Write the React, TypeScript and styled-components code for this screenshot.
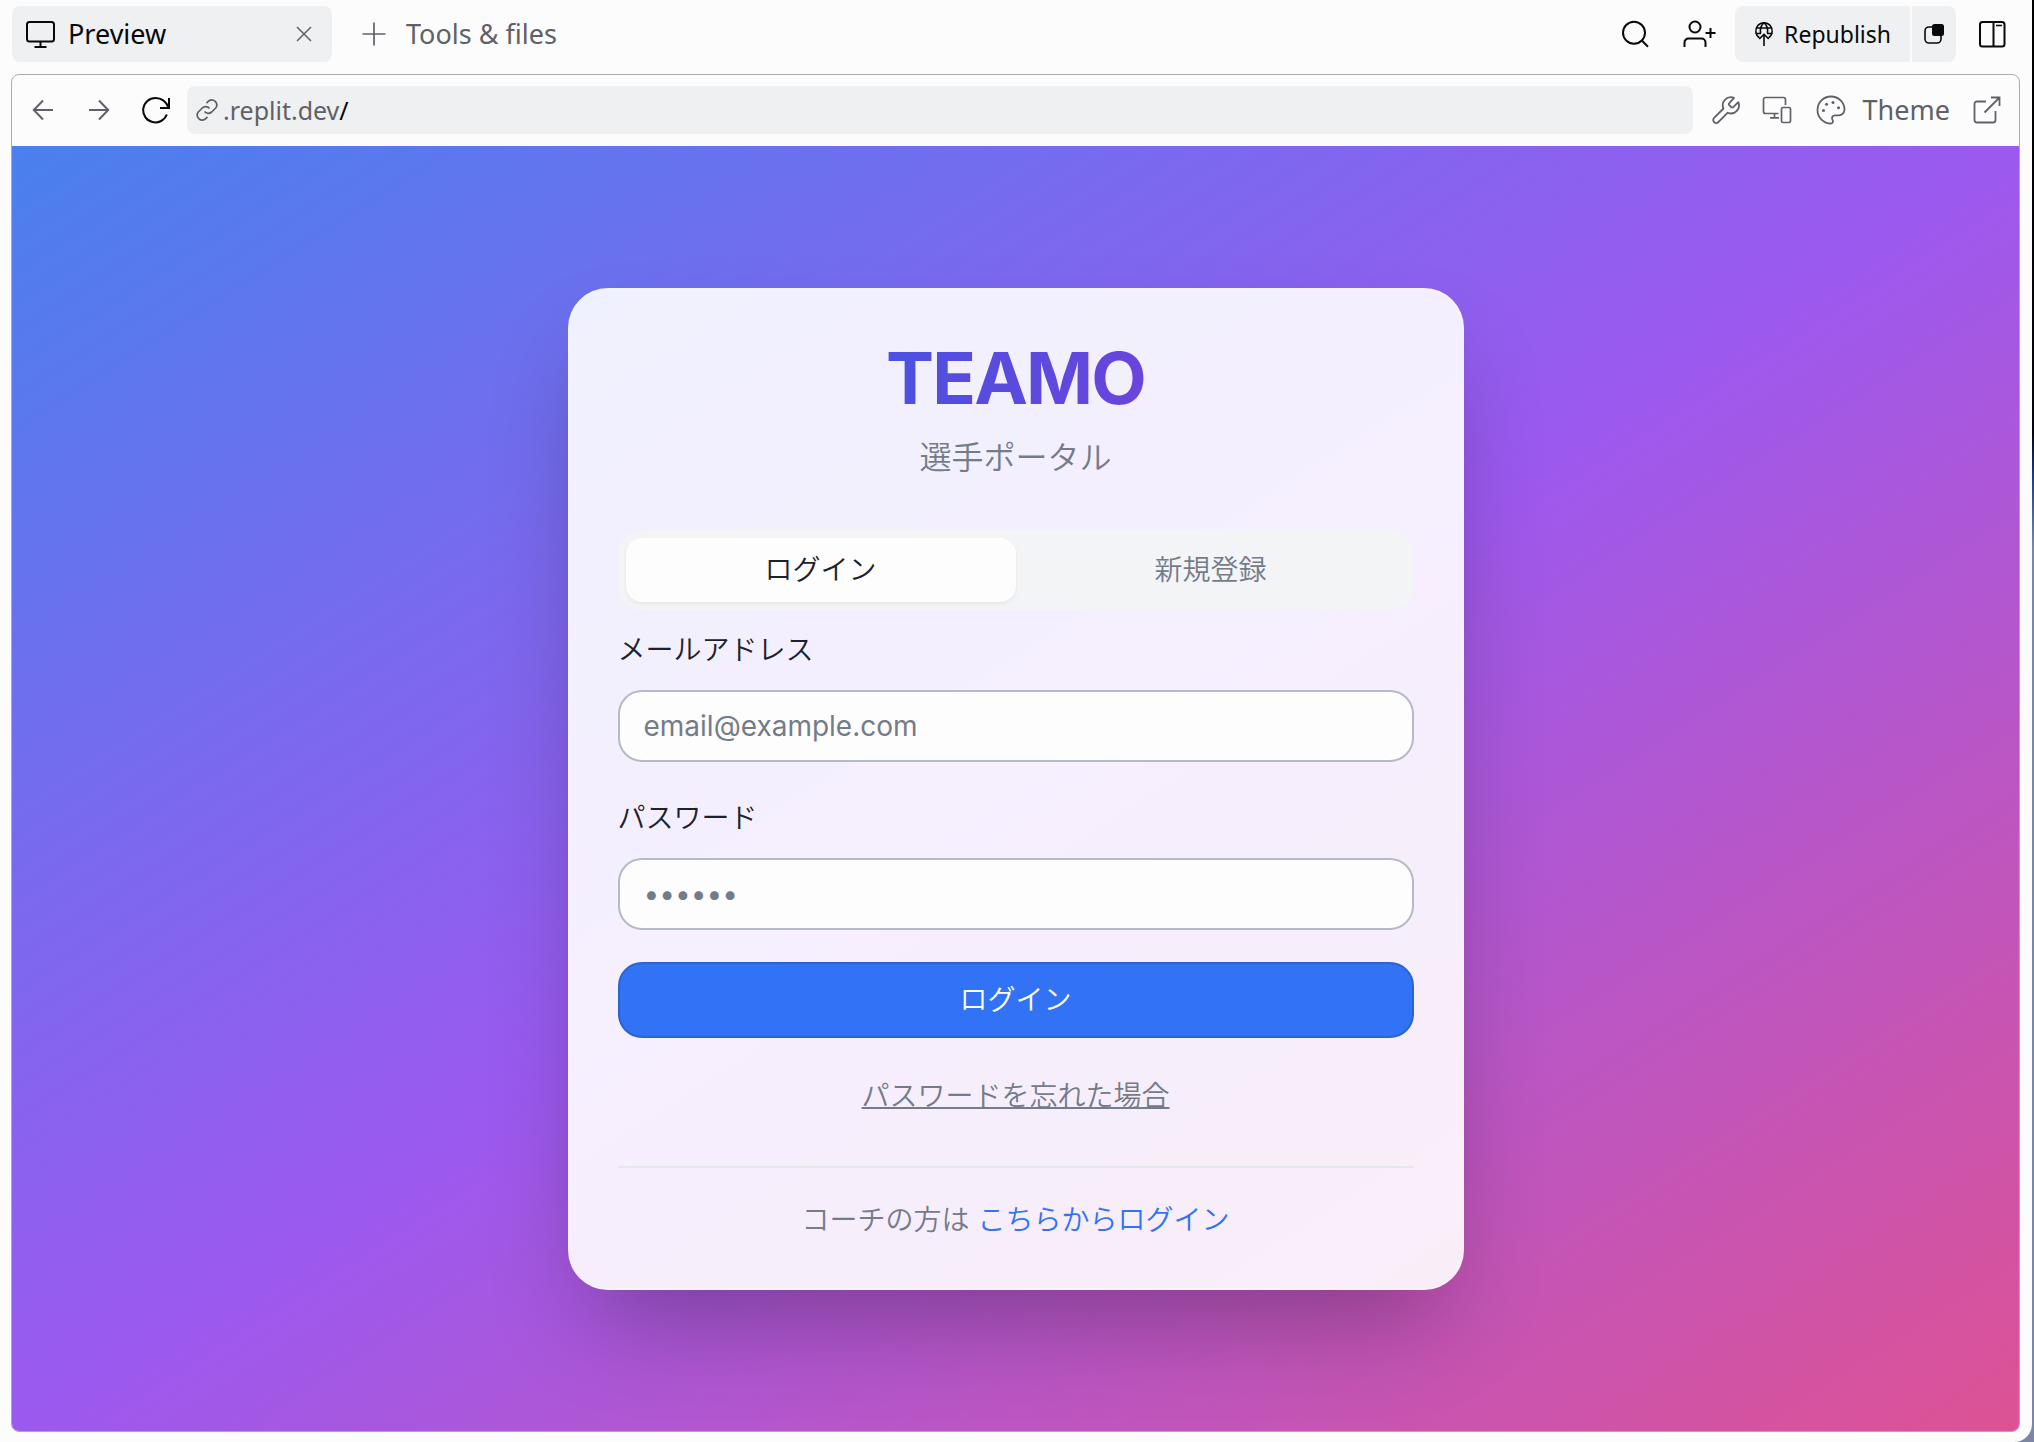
import React from "react";
import styled, { createGlobalStyle } from "styled-components";

const UI = `"Noto Sans", "Open Sans", sans-serif`;
const APP = `Inter, "Noto Sans CJK JP", sans-serif`;

const Global = createGlobalStyle`
  *, *::before, *::after { box-sizing: border-box; }
  html, body, #root { height: 100%; margin: 0; }
  body { background: #0c0e12; }
  button, input { font: inherit; color: inherit; }
  button { border: 0; padding: 0; background: none; cursor: pointer; }
`;

const Desktop = styled.div`
  min-height: 100%;
  display: flex;
  padding-right: 2px;
  background: linear-gradient(#000 0%, #04040c 30%, #1c3b80 33%, #7d87a5 38%, #7d87a5 100%);
`;

const Window = styled.div`
  flex: 1;
  min-width: 0;
  display: flex;
  flex-direction: column;
  padding: 6px 12px 10px 11px;
  background: #fcfcfc;
  border-bottom-right-radius: 18px;
  font-family: ${UI};
  font-size: 27px;
  line-height: 36px;
  color: #07090d;
`;

const Header = styled.header`
  display: flex;
  align-items: center;
  height: 56px;
  margin-bottom: 12px;
  padding-left: 1px;
`;

const Tab = styled.div`
  display: flex;
  align-items: center;
  gap: 12px;
  width: 320px;
  height: 56px;
  padding: 0 20px 0 12px;
  border-radius: 8px;
  background: #eff0f2;
`;

const TabTitle = styled.span`
  flex: 1;
`;

const ToolsButton = styled.button`
  display: flex;
  align-items: center;
  gap: 20px;
  margin-left: 30px;
  color: #5f6168;
`;

const HeaderActions = styled.div`
  display: flex;
  align-items: center;
  margin-left: auto;
`;

const IconButton = styled.button<{ $w: number; $muted?: boolean }>`
  display: flex;
  align-items: center;
  justify-content: center;
  flex: none;
  width: ${(p) => p.$w}px;
  height: 48px;
  color: ${(p) => (p.$muted ? "#5f6168" : "#07090d")};
`;

const SplitButton = styled.div`
  display: flex;
  gap: 2px;
  margin: 0 8px 0 4px;
  border-radius: 8px;
  overflow: hidden;
`;

const SplitPart = styled.button<{ $pad: number }>`
  display: flex;
  align-items: center;
  gap: 10px;
  height: 56px;
  padding: 0 ${(p) => p.$pad}px;
  background: #eff0f2;
  font-size: 23px;
`;

const Panel = styled.section`
  flex: 1;
  display: flex;
  flex-direction: column;
  border: 1px solid #a9abb2;
  border-radius: 8px;
  overflow: hidden;
`;

const Toolbar = styled.div`
  display: flex;
  align-items: center;
  height: 71px;
  padding: 0 7px 1px 3px;
`;

const AddressBar = styled.div`
  display: flex;
  align-items: center;
  flex: 1;
  gap: 4px;
  height: 48px;
  margin: 0 8px 0 2px;
  padding: 0 8px;
  border-radius: 8px;
  background: #eff0f2;
  color: #5f6168;
  font-size: 25px;
`;

const Address = styled.a`
  color: #5f6168;
  text-decoration: none;

  b {
    font-weight: 400;
    color: #07090d;
  }
`;

const ThemeButton = styled.button`
  display: flex;
  align-items: center;
  gap: 17px;
  margin: 0 12px 0 13px;
  color: #5f6168;
`;

const Stage = styled.main`
  flex: 1;
  display: flex;
  align-items: center;
  justify-content: center;
  padding: 32px;
  background: linear-gradient(to bottom right, #4a80ee, #9c59ef 50%, #dd5294);
  font-family: ${APP};
  font-size: 28px;
  line-height: 40px;
  font-weight: 350;
`;

const Card = styled.div`
  width: 100%;
  max-width: 896px;
  display: flex;
  flex-direction: column;
  padding: 48px;
  border: 2px solid rgba(255, 255, 255, 0.2);
  border-radius: 40px;
  background: rgba(255, 255, 255, 0.9);
  box-shadow: 0 50px 100px -24px rgba(0, 0, 0, 0.3);
`;

const Brand = styled.h1`
  align-self: center;
  margin: 0;
  font-size: 72px;
  line-height: 80px;
  font-weight: 700;
  letter-spacing: -0.025em;
  background: linear-gradient(to right, #4b51e0, #6a44dd);
  background-clip: text;
  color: transparent;
`;

const Subtitle = styled.p`
  margin: 16px 0 48px;
  font-size: 32px;
  line-height: 48px;
  text-align: center;
  color: #747b89;
`;

const TabList = styled.div`
  display: grid;
  grid-template-columns: 1fr 1fr;
  padding: 8px;
  border-radius: 24px;
  background: #f3f4f6;
`;

const TabButton = styled.button<{ $active?: boolean }>`
  height: 64px;
  border-radius: 16px;
  color: ${(p) => (p.$active ? "#1d212b" : "#747b89")};
  background: ${(p) => (p.$active ? "#fdfdfd" : "transparent")};
  box-shadow: ${(p) => (p.$active ? "0 2px 4px rgba(0, 0, 0, 0.06)" : "none")};
`;

const Form = styled.form`
  display: flex;
  flex-direction: column;
  margin-top: 20px;
`;

const Field = styled.div`
  display: flex;
  flex-direction: column;
  gap: 20px;
  margin-bottom: 36px;

  &:nth-of-type(2) {
    margin-bottom: 32px;
  }
`;

const FieldLabel = styled.label`
  color: #1d212b;
`;

const TextInput = styled.input`
  width: 100%;
  height: 72px;
  padding: 0 24px;
  border: 2px solid #b5bac6;
  border-radius: 24px;
  background: #fdfdfd;
  font-weight: 400;
  outline: none;

  &::placeholder {
    color: #747b89;
    opacity: 1;
  }
`;

const Submit = styled.button`
  height: 76px;
  border: 2px solid #2b63d2;
  border-radius: 24px;
  background: #3273f6;
  color: #fdfdfd;
`;

const Forgot = styled.a`
  align-self: center;
  margin: 38px 0 50px;
  color: #747b89;
  text-decoration: underline;
  text-decoration-thickness: 2px;
`;

const Footer = styled.p`
  margin: 0;
  padding-top: 32px;
  border-top: 2px solid #e5e7eb;
  text-align: center;
  color: #747b89;
`;

const CoachLink = styled.a`
  color: #3273f6;
  text-decoration: none;
`;

type IconProps = { w: number; h: number; sw?: number; children: React.ReactNode };
const Icon = ({ w, h, sw = 2, children }: IconProps) => (
  <svg width={w} height={h} viewBox={`0 0 ${w} ${h}`} fill="none" stroke="currentColor" strokeWidth={sw} aria-hidden="true">
    {children}
  </svg>
);

const MonitorIcon = () => (
  <Icon w={32} h={32}>
    <rect x="3" y="4" width="27" height="19.5" rx="2.5" />
    <path d="M16.5 23.5V29M10.5 29h12" />
  </Icon>
);
const CloseIcon = () => (
  <Icon w={16} h={16} sw={1.5}>
    <path d="M1 1l14 14M15 1L1 15" />
  </Icon>
);
const PlusIcon = () => (
  <Icon w={24} h={24} sw={1.7}>
    <path d="M12 .5v23M.5 12h23" />
  </Icon>
);
const SearchIcon = () => (
  <Icon w={32} h={32}>
    <circle cx="15" cy="14.7" r="11" />
    <path d="M22.8 22.5l6.2 6.2" />
  </Icon>
);
const UserPlusIcon = () => (
  <Icon w={34} h={32}>
    <circle cx="13" cy="9" r="5.5" />
    <path d="M2.5 29v-4.500a4 4 0 0 1 4-4h13a4 4 0 0 1 4 4V29M28.500 10v10M23.500 15h10" />
  </Icon>
);
const GlobeUpIcon = () => (
  <Icon w={20} h={28} sw={1.6}>
    <path d="M5.5 17.800A8.200 8.200 0 1 1 14.500 17.800" />
    <path d="M6.500 13.500C5.800 8 7.500 4.800 10 2.700c2.500 2.100 4.200 5.300 3.500 10.800M2.400 8h15.200M2.400 13.500h4.600M13 13.500h4.600M10 26V14.500M5.300 19l4.700-4.700 4.700 4.700" />
  </Icon>
);
const CopyIcon = () => (
  <Icon w={22} h={24} sw={1.6}>
    <path d="M9 5H6a4 4 0 0 0-4 4v8a4 4 0 0 0 4 4h8a4 4 0 0 0 4-4v-3" />
    <rect x="9" y="2" width="12" height="12" rx="2.5" fill="currentColor" stroke="none" />
  </Icon>
);
const SidebarIcon = () => (
  <Icon w={28} h={28}>
    <rect x="2" y="2" width="24.5" height="24.5" rx="2.5" />
    <path d="M15.500 2v24.500" />
    <path d="M18 5.500h6" strokeWidth="1.6" />
  </Icon>
);
const BackIcon = () => (
  <Icon w={22} h={22}>
    <path d="M21 11H2M11 1.500L1.800 11 11 20.500" />
  </Icon>
);
const ForwardIcon = () => (
  <Icon w={22} h={22}>
    <path d="M1 11h19M11 1.500L20.200 11 11 20.500" />
  </Icon>
);
const ReloadIcon = () => (
  <Icon w={30} h={28}>
    <path d="M28 2v10H19M27.500 11.500C25 5.500 20 2 14.500 2a12.200 12.200 0 1 0 11.300 16.500" />
  </Icon>
);
const LinkIcon = () => (
  <Icon w={24} h={24} sw={1.7}>
    <path d="M9.500 13.500a5 5 0 0 0 7.200.5l4-4a5 5 0 0 0-7-7l-2.200 2.200M14.500 10.500a5 5 0 0 0-7.200-.5l-4 4a5 5 0 0 0 7 7l2.200-2.200" />
  </Icon>
);
const WrenchIcon = () => (
  <Icon w={30} h={30} sw={1.8}>
    <path
      d="M18.300 8.200a1.400 1.400 0 0 0 0 2l2 2a1.400 1.400 0 0 0 2 0l5-5a8 8 0 0 1-10.600 10.500L7.300 27.100a2.900 2.900 0 0 1-4.200-4.200l9.400-9.400A8 8 0 0 1 23 2.900z"
      strokeLinejoin="round"
    />
  </Icon>
);
const DevicesIcon = () => (
  <Icon w={30} h={28} sw={1.7}>
    <path d="M23.500 9V3.500a2 2 0 0 0-2-2h-18a2 2 0 0 0-2 2v12a2 2 0 0 0 2 2h13M12.500 17.500v4M8 21.800h9" />
    <rect x="19.5" y="11.5" width="9" height="15" rx="1.5" />
  </Icon>
);
const PaletteIcon = () => (
  <Icon w={30} h={30} sw={1.8}>
    <path d="M15 1.500C7.500 1.500 1.500 7.500 1.500 15S7.500 28.500 15 28.500c1.800 0 2.600-2 1.500-3.800-1.300-2.200 0-4.400 2.600-4.400h3.700c3.300 0 5.700-2.600 5.700-5.800C28.500 7.300 22.500 1.500 15 1.500z" />
    <g fill="currentColor" stroke="none">
      <circle cx="7.5" cy="15.5" r="1.5" />
      <circle cx="10.5" cy="9.3" r="1.5" />
      <circle cx="17" cy="7.5" r="1.5" />
      <circle cx="22.5" cy="12.8" r="1.5" />
    </g>
  </Icon>
);
const ExternalIcon = () => (
  <Icon w={28} h={28} sw={1.8}>
    <path d="M13 5.500H4a2.500 2.500 0 0 0-2.500 2.500v16A2.500 2.500 0 0 0 4 26.500h16a2.500 2.500 0 0 0 2.500-2.500v-9M18 1.500h8.500V10M26.500 1.500L11.500 16.500" />
  </Icon>
);

export default function App() {
  return (
    <>
      <Global />
      <Desktop>
        <Window>
          <Header>
            <Tab>
              <MonitorIcon />
              <TabTitle>Preview</TabTitle>
              <IconButton $w={16} $muted aria-label="Close tab">
                <CloseIcon />
              </IconButton>
            </Tab>
            <ToolsButton>
              <PlusIcon />
              Tools &amp; files
            </ToolsButton>
            <HeaderActions>
              <IconButton $w={64} aria-label="Search">
                <SearchIcon />
              </IconButton>
              <IconButton $w={64} aria-label="Invite">
                <UserPlusIcon />
              </IconButton>
              <SplitButton>
                <SplitPart $pad={19}>
                  <GlobeUpIcon />
                  Republish
                </SplitPart>
                <SplitPart $pad={11} aria-label="Copy">
                  <CopyIcon />
                </SplitPart>
              </SplitButton>
              <IconButton $w={56} aria-label="Toggle sidebar">
                <SidebarIcon />
              </IconButton>
            </HeaderActions>
          </Header>
          <Panel>
            <Toolbar>
              <IconButton $w={56} $muted aria-label="Back">
                <BackIcon />
              </IconButton>
              <IconButton $w={56} $muted aria-label="Forward">
                <ForwardIcon />
              </IconButton>
              <IconButton $w={58} aria-label="Reload">
                <ReloadIcon />
              </IconButton>
              <AddressBar>
                <LinkIcon />
                <Address href="#">
                  .replit.dev<b>/</b>
                </Address>
              </AddressBar>
              <IconButton $w={50} $muted aria-label="Developer tools">
                <WrenchIcon />
              </IconButton>
              <IconButton $w={52} $muted aria-label="Devices">
                <DevicesIcon />
              </IconButton>
              <ThemeButton>
                <PaletteIcon />
                Theme
              </ThemeButton>
              <IconButton $w={50} $muted aria-label="Open in new tab">
                <ExternalIcon />
              </IconButton>
            </Toolbar>
            <Stage>
              <Card>
                <Brand>TEAMO</Brand>
                <Subtitle>選手ポータル</Subtitle>
                <TabList role="tablist">
                  <TabButton role="tab" aria-selected="true" $active>
                    ログイン
                  </TabButton>
                  <TabButton role="tab" aria-selected="false">
                    新規登録
                  </TabButton>
                </TabList>
                <Form onSubmit={(e) => e.preventDefault()}>
                  <Field>
                    <FieldLabel htmlFor="email">メールアドレス</FieldLabel>
                    <TextInput id="email" type="email" placeholder="email@example.com" />
                  </Field>
                  <Field>
                    <FieldLabel htmlFor="password">パスワード</FieldLabel>
                    <TextInput id="password" type="password" placeholder="••••••" />
                  </Field>
                  <Submit type="submit">ログイン</Submit>
                </Form>
                <Forgot href="#">パスワードを忘れた場合</Forgot>
                <Footer>
                  コーチの方は <CoachLink href="#">こちらからログイン</CoachLink>
                </Footer>
              </Card>
            </Stage>
          </Panel>
        </Window>
      </Desktop>
    </>
  );
}
